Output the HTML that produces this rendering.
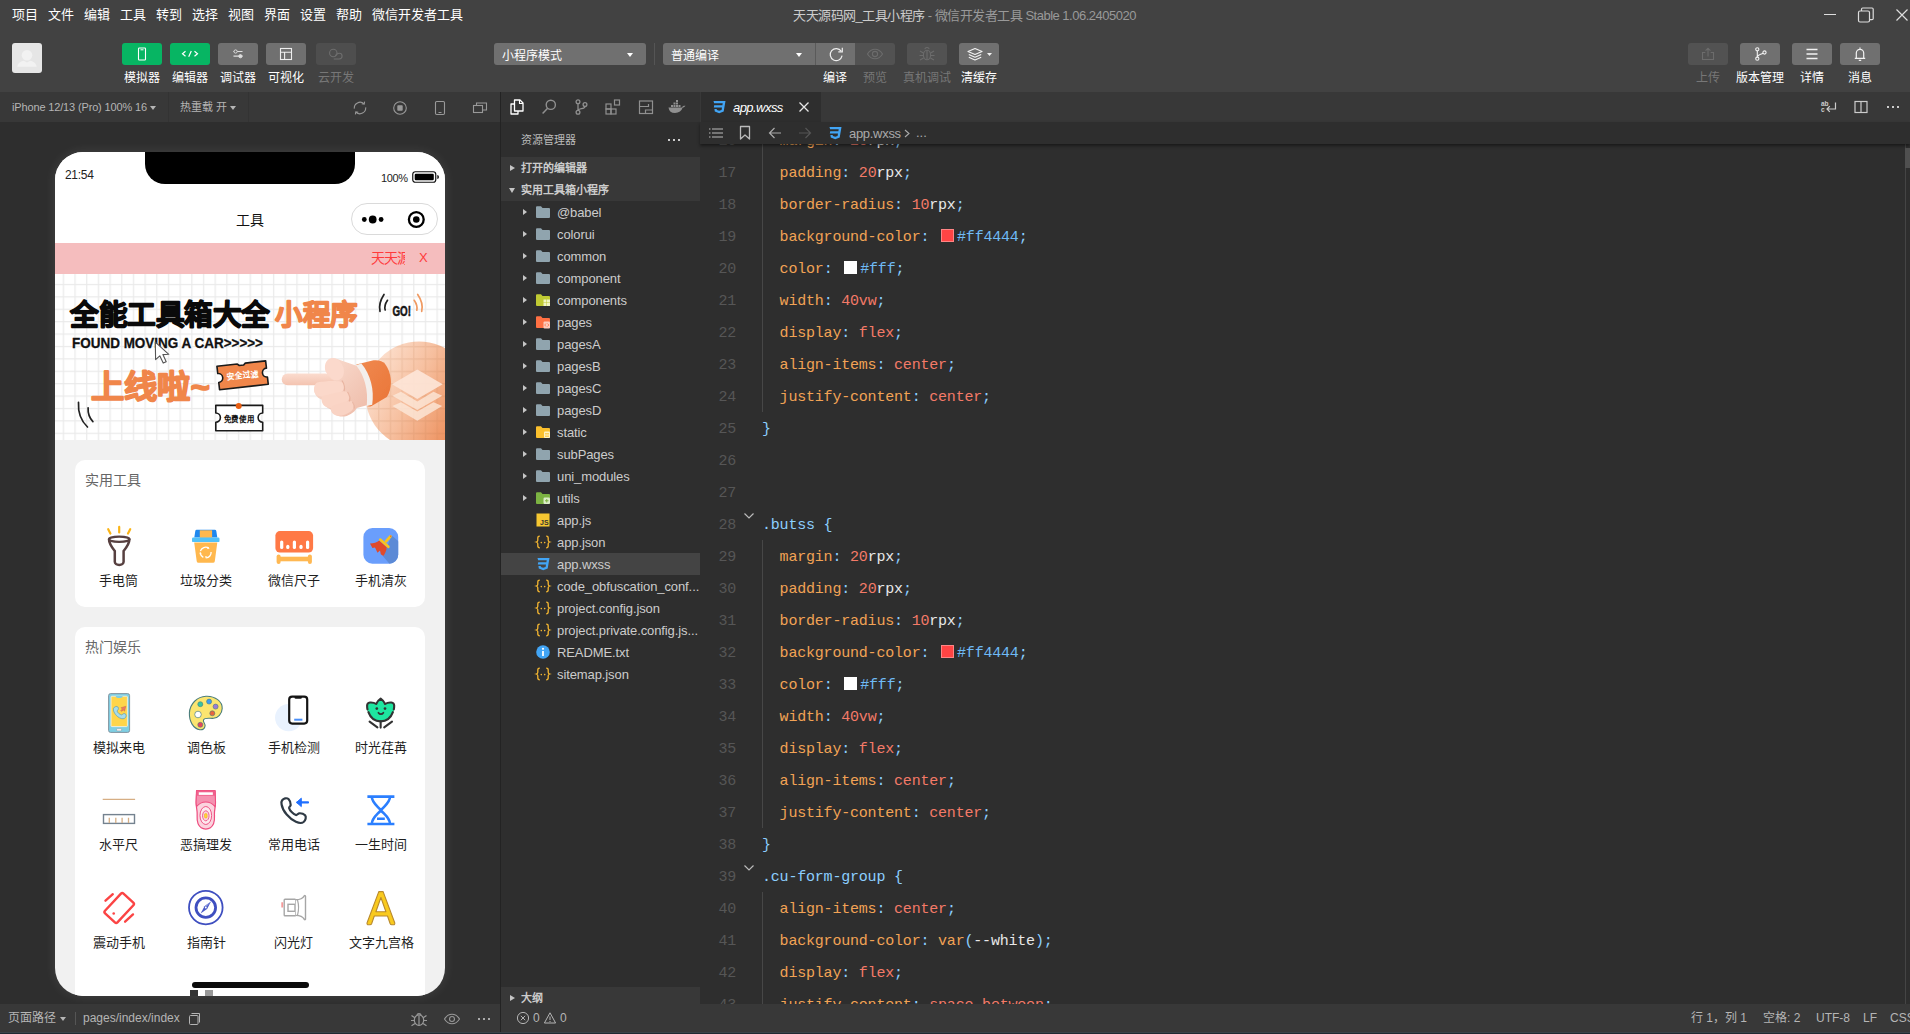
<!DOCTYPE html>
<html lang="zh-CN">
<head>
<meta charset="utf-8">
<title>微信开发者工具</title>
<style>
*{box-sizing:border-box;margin:0;padding:0}
html,body{width:1910px;height:1034px;overflow:hidden;background:#2e2e2e}
body{font-family:"Liberation Sans",sans-serif;font-size:12px;color:#ccc;position:relative;-webkit-font-smoothing:antialiased}
.abs{position:absolute}
svg{display:block;overflow:visible}
/* ---------- top bar ---------- */
#top{position:absolute;left:0;top:0;width:1910px;height:92px;background:#424242}
#menu{position:absolute;left:12px;top:6px;height:18px;line-height:18px;font-size:13px;color:#fff;white-space:nowrap}
#menu span{position:absolute;top:0;white-space:nowrap}
#title{position:absolute;left:793px;top:7px;width:360px;letter-spacing:-.500px;height:18px;line-height:18px;font-size:13px;color:#999;white-space:nowrap;overflow:hidden}
#title b{font-weight:normal;color:#ccc}
.tb{position:absolute;top:43px;width:40px;height:22px;border-radius:3px;background:#707070}
.tb.g{background:#07b563}
.tb.d{background:#525252}
.tl{position:absolute;top:70px;height:16px;line-height:16px;width:80px;margin-left:-40px;text-align:center;font-size:12px;color:#fff;white-space:nowrap}
.tl.d{color:#777}
.sel{position:absolute;top:43px;height:22px;background:#707070;border-radius:3px;color:#fff;font-size:12px;line-height:26px;padding-left:8px;white-space:nowrap;overflow:hidden}
.caret{position:absolute;width:0;height:0;border-left:3px solid transparent;border-right:3px solid transparent;border-top:4px solid #fff}
/* ---------- simulator ---------- */
#simbar{position:absolute;left:0;top:92px;width:500px;height:30px;background:#383838;color:#b5b5b5;font-size:11px;line-height:30px;white-space:nowrap}
#vdiv{position:absolute;left:500px;top:92px;width:1px;height:942px;background:#232323}
#sim{position:absolute;left:0;top:122px;width:500px;height:882px;background:#2e2e2e;overflow:hidden}
#simfoot{position:absolute;left:0;top:1004px;width:500px;height:30px;background:#383838;color:#b5b5b5;font-size:12px;line-height:28px;white-space:nowrap}
/* ---------- editor side ---------- */
#actbar{position:absolute;left:501px;top:92px;width:199px;height:30px;background:#333}
#explorer{position:absolute;left:501px;top:122px;width:199px;height:882px;background:#2e2e2e;overflow:hidden;font-size:13px;color:#ccc}
#tabs{position:absolute;left:700px;top:92px;width:1210px;height:30px;background:#383838}
#crumbs{position:absolute;left:700px;top:122px;width:1210px;height:22px;background:#2e2e2e;z-index:3;box-shadow:0 2px 3px rgba(0,0,0,.45)}
#code{position:absolute;left:700px;top:144px;width:1210px;height:860px;background:#2e2e2e;overflow:hidden}
#status{position:absolute;left:501px;top:1004px;width:1409px;height:30px;background:#383838;color:#b5b5b5;font-size:12px;line-height:28px;white-space:nowrap}

/* ---------- phone ---------- */
#phone{position:absolute;left:55px;top:30px;width:390px;height:844px;background:#f1f1f1;border-radius:28px;overflow:hidden;color:#222;box-shadow:0 0 12px rgba(255,255,255,.1)}
#notch{position:absolute;left:90px;top:0;width:210px;height:32px;background:#000;border-radius:0 0 20px 20px;z-index:5}
#nav{position:absolute;left:0;top:0;width:390px;height:91px;background:#fff}
#notice{position:absolute;left:0;top:91px;width:390px;height:31px;background:#f5bdbe;color:#ff3b3b;font-size:14px;line-height:30px}
#banner{position:absolute;left:0;top:122px;width:390px;height:166px;background:#fff;overflow:hidden}
.card{position:absolute;left:20px;width:350px;background:#fff;border-radius:10px}
.ct{position:absolute;left:10px;top:11px;font-size:14px;line-height:18px;color:#666;white-space:nowrap}
.it{position:absolute;width:87.500px;height:70px;text-align:center}
.it svg{position:absolute;left:23.750px;top:0;width:40px;height:40px}
.it span{position:absolute;left:-10px;right:-10px;top:47px;font-size:13px;line-height:16px;color:#1f1f1f;white-space:nowrap;text-align:center}

/* ---------- explorer ---------- */
.sec{position:absolute;left:0;width:199px;height:22px;line-height:22px;background:#383838;color:#ccc;font-size:11px;font-weight:700;padding-left:20px;white-space:nowrap}
.sec i{position:absolute;left:9px;top:8px;width:0;height:0;border-top:3.500px solid transparent;border-bottom:3.500px solid transparent;border-left:5px solid #c5c5c5}
.sec i.o{left:8px;top:9px;border-left:3.500px solid transparent;border-right:3.500px solid transparent;border-top:5px solid #c5c5c5;border-bottom:0}
.row{position:absolute;left:0;width:199px;height:22px;line-height:22px;color:#ccc;font-size:13px;white-space:nowrap;overflow:hidden}
.row.s{background:#444}
.row b{position:absolute;left:56px;top:1px;font-weight:normal;letter-spacing:-.100px}
.row i{position:absolute;left:22px;top:7.500px;width:0;height:0;border-top:3.500px solid transparent;border-bottom:3.500px solid transparent;border-left:4.500px solid #c5c5c5}
.row svg{position:absolute;left:34px;top:3px;width:16px;height:16px}
/* ---------- code ---------- */
#code{font-family:"Liberation Mono",monospace;font-size:15px;letter-spacing:-.200px;color:#e6e6e6}
.ln{position:absolute;left:0;width:36px;text-align:right;height:32px;line-height:36px;color:#565656;white-space:pre}
.cl{position:absolute;left:62px;height:32px;line-height:36px;white-space:pre}
.p{color:#f2a355}.n{color:#f47a68}.u{color:#e8e8e8}.c{color:#8ccfff}.h{color:#6fbaf5}.k{color:#f47a68}
.sw{display:inline-block;width:13px;height:13px;margin:0 3px -1px 3px;border:1px solid rgba(255,255,255,.35)}
.ig{position:absolute;left:62px;width:1px;background:#474747}
.fold{position:absolute;left:43px;width:12px;height:12px}
</style>
</head>
<body>

<!-- ================= TOP BAR ================= -->
<div id="top">
  <div id="menu">
    <span style="left:0">项目</span><span style="left:36px">文件</span><span style="left:72px">编辑</span><span style="left:108px">工具</span><span style="left:144px">转到</span><span style="left:180px">选择</span><span style="left:216px">视图</span><span style="left:252px">界面</span><span style="left:288px">设置</span><span style="left:324px">帮助</span><span style="left:360px">微信开发者工具</span>
  </div>
  <div id="title"><b>天天源码网_工具小程序</b> - 微信开发者工具 Stable 1.06.2405020</div>
  <!-- avatar -->
  <div class="abs" style="left:12px;top:43px;width:30px;height:30px;border-radius:3px;background:#e6e6e6;overflow:hidden">
    <svg width="30" height="30" viewBox="0 0 30 30"><circle cx="15" cy="12.300" r="5.300" fill="#f2f2f2"/><path d="M5.300 23.800c.5-3.600 3.200-5.400 6.400-6.100l3.300 1.800 3.300-1.800c3.200.7 5.900 2.500 6.400 6.100z" fill="#f2f2f2"/></svg>
  </div>
  <!-- left buttons -->
  <div class="tb g" style="left:122px"><svg width="40" height="22" viewBox="0 0 40 22"><rect x="16.500" y="5" width="7" height="12" rx=".8" fill="none" stroke="#fff" stroke-width="1.100"/><path d="M18.500 6.800h3" stroke="#fff" stroke-width="1"/></svg></div>
  <div class="tb g" style="left:170px"><svg width="40" height="22" viewBox="0 0 40 22"><path d="M15.500 8.300l-3 2.500 3 2.500M24.500 8.300l3 2.500-3 2.500M21.300 8l-2.600 5.800" fill="none" stroke="#fff" stroke-width="1.200"/></svg></div>
  <div class="tb" style="left:218px"><svg width="40" height="22" viewBox="0 0 40 22"><path d="M15.500 8.500h9M15.500 13.200h9" stroke="#ddd" stroke-width="1.200"/><circle cx="17.600" cy="8.500" r="1.600" fill="#6b6b6b" stroke="#ddd" stroke-width="1"/><circle cx="22.400" cy="13.200" r="1.600" fill="#ddd" stroke="#ddd" stroke-width="1"/></svg></div>
  <div class="tb" style="left:266px"><svg width="40" height="22" viewBox="0 0 40 22"><rect x="14.500" y="5.500" width="11" height="11" fill="none" stroke="#eee" stroke-width="1.100"/><path d="M14.500 9.200h11M18.600 9.200v7.300" stroke="#eee" stroke-width="1.100"/></svg></div>
  <div class="tb d" style="left:316px;background:#4e4e4e"><svg width="40" height="22" viewBox="0 0 40 22"><circle cx="17.300" cy="10" r="3.700" fill="none" stroke="#6e6e6e" stroke-width="1.100"/><path d="M19.300 13.100c.8-1.900 2.300-2.900 3.900-2.900a2.900 2.900 0 0 1 0 5.800h-5.500" fill="none" stroke="#6e6e6e" stroke-width="1.100"/></svg></div>
  <div class="tl" style="left:142px">模拟器</div>
  <div class="tl" style="left:190px">编辑器</div>
  <div class="tl" style="left:238px">调试器</div>
  <div class="tl" style="left:286px">可视化</div>
  <div class="tl d" style="left:336px">云开发</div>
  <!-- mode select -->
  <div class="sel" style="left:494px;width:152px">小程序模式</div>
  <div class="caret" style="left:627px;top:53px"></div>
  <div class="abs" style="left:654px;top:43px;width:1px;height:22px;background:#555"></div>
  <div class="sel" style="left:663px;width:152px;border-radius:3px 0 0 3px">普通编译</div>
  <div class="caret" style="left:796px;top:53px"></div>
  <div class="tb" style="left:815px;border-radius:0;border-left:1px solid #5a5a5a"><svg width="40" height="22" viewBox="0 0 40 22"><path d="M25.200 8.200a6 6 0 1 0 .9 4.500" fill="none" stroke="#eee" stroke-width="1.200"/><path d="M26.300 4.800v4h-4" fill="none" stroke="#eee" stroke-width="1.200"/></svg></div>
  <div class="tb d" style="left:855px;border-radius:0 3px 3px 0;background:#525252"><svg width="40" height="22" viewBox="0 0 40 22"><path d="M12.500 11c2-3.300 4.600-4.800 7.500-4.800s5.500 1.500 7.500 4.800c-2 3.300-4.600 4.800-7.500 4.800s-5.500-1.500-7.500-4.800z" fill="none" stroke="#6c6c6c" stroke-width="1.100"/><circle cx="20" cy="11" r="2.600" fill="none" stroke="#6c6c6c" stroke-width="1.100"/></svg></div>
  <div class="tb d" style="left:907px;background:#525252"><svg width="40" height="22" viewBox="0 0 40 22"><ellipse cx="20" cy="12" rx="3.600" ry="4.800" fill="none" stroke="#6c6c6c" stroke-width="1.100"/><path d="M20 7.200v9.600M17.800 6.200a2.300 2.300 0 0 1 4.400 0M13 8l3.400 2M27 8l-3.400 2M12.500 12.500h3.900M27.500 12.500h-3.900M13 17l3.600-2M27 17l-3.600-2" fill="none" stroke="#6c6c6c" stroke-width="1.100"/></svg></div>
  <div class="tb" style="left:959px"><svg width="40" height="22" viewBox="0 0 40 22"><path d="M16 5.500l7 3-7 3-7-3zM9.800 11.500l6.200 2.700 6.200-2.700M9.800 14.300l6.200 2.700 6.200-2.700" transform="translate(0 0)" fill="none" stroke="#f2f2f2" stroke-width="1.200" stroke-linejoin="round"/><path d="M28 10l2.500 3 2.500-3z" fill="#f2f2f2"/></svg></div>
  <div class="tl" style="left:835px">编译</div>
  <div class="tl d" style="left:875px">预览</div>
  <div class="tl d" style="left:927px">真机调试</div>
  <div class="tl" style="left:979px">清缓存</div>
  <!-- right buttons -->
  <div class="tb d" style="left:1688px;background:#525252"><svg width="40" height="22" viewBox="0 0 40 22"><path d="M17.300 9.500h-2.800v7h11v-7h-2.800M20 13.500v-8M17.600 7.600l2.400-2.400 2.400 2.400" fill="none" stroke="#6c6c6c" stroke-width="1.100"/></svg></div>
  <div class="tb" style="left:1740px"><svg width="40" height="22" viewBox="0 0 40 22"><circle cx="17.300" cy="6.300" r="1.600" fill="none" stroke="#f2f2f2" stroke-width="1.100"/><circle cx="17.300" cy="15.700" r="1.600" fill="none" stroke="#f2f2f2" stroke-width="1.100"/><circle cx="24.500" cy="9.500" r="1.600" fill="none" stroke="#f2f2f2" stroke-width="1.100"/><path d="M17.300 7.900v6.200M17.500 13.500c.5-2 3.500-2 5.600-3.300" fill="none" stroke="#f2f2f2" stroke-width="1.100"/></svg></div>
  <div class="tb" style="left:1792px"><svg width="40" height="22" viewBox="0 0 40 22"><path d="M14.500 6.500h11M14.500 11h11M14.500 15.500h11" stroke="#f2f2f2" stroke-width="1.300"/></svg></div>
  <div class="tb" style="left:1840px"><svg width="40" height="22" viewBox="0 0 40 22"><path d="M14.800 15.300h10.400M16.300 15.300v-5.300a3.700 3.700 0 0 1 7.400 0v5.300M20 4.500v1.800M18.800 17.300h2.400" fill="none" stroke="#f2f2f2" stroke-width="1.200"/></svg></div>
  <div class="tl d" style="left:1708px">上传</div>
  <div class="tl" style="left:1760px">版本管理</div>
  <div class="tl" style="left:1812px">详情</div>
  <div class="tl" style="left:1860px">消息</div>
  <!-- window controls -->
  <div class="abs" style="left:1824px;top:14px;width:12px;height:1px;background:#ddd"></div>
  <svg class="abs" style="left:1857px;top:6px" width="18" height="18" viewBox="0 0 18 18"><rect x="1.500" y="5" width="11" height="11" rx="1.500" fill="none" stroke="#ddd" stroke-width="1.200"/><path d="M4.500 5v-1.800a1.200 1.200 0 0 1 1.200-1.200h9.300a1.200 1.200 0 0 1 1.200 1.200v9.300a1.200 1.200 0 0 1-1.200 1.200h-2.500" fill="none" stroke="#ddd" stroke-width="1.200"/></svg>
  <svg class="abs" style="left:1895px;top:8px" width="14" height="14" viewBox="0 0 14 14"><path d="M1.500 1.500l11 11M12.500 1.500l-11 11" stroke="#ddd" stroke-width="1.200"/></svg>
</div>

<!-- ================= SIMULATOR ================= -->
<div id="simbar">
  <span class="abs" style="left:12px;top:0;letter-spacing:-.150px">iPhone 12/13 (Pro) 100% 16</span>
  <div class="caret" style="left:150px;top:14px;border-top-color:#b5b5b5"></div>
  <div class="abs" style="left:168px;top:0;width:1px;height:30px;background:#333"></div>
  <span class="abs" style="left:180px;top:0">热重载 开</span>
  <div class="caret" style="left:230px;top:14px;border-top-color:#b5b5b5"></div>
  <div class="abs" style="left:248px;top:0;width:1px;height:30px;background:#333"></div>
  <svg class="abs" style="left:352px;top:7.500px" width="16" height="16" viewBox="0 0 16 16"><path d="M2.300 8.600a5.800 5.800 0 0 1 9.600-4.900M13.700 7.400a5.800 5.800 0 0 1-9.600 4.900" fill="none" stroke="#999" stroke-width="1.100"/><path d="M12.600 1.600l-.4 2.500-2.500-.4M3.400 14.400l.4-2.500 2.500.4" fill="none" stroke="#999" stroke-width="1.100"/></svg>
  <svg class="abs" style="left:392px;top:7.500px" width="16" height="16" viewBox="0 0 16 16"><circle cx="8" cy="8" r="6.300" fill="none" stroke="#999" stroke-width="1.100"/><rect x="5.300" y="5.300" width="5.400" height="5.400" rx=".8" fill="#999"/></svg>
  <svg class="abs" style="left:432px;top:7.500px" width="16" height="16" viewBox="0 0 16 16"><rect x="3.500" y="1.500" width="9" height="13" rx="1.200" fill="none" stroke="#999" stroke-width="1.100"/><path d="M6.500 12.500h3" stroke="#999" stroke-width="1"/></svg>
  <svg class="abs" style="left:472px;top:7.500px" width="16" height="16" viewBox="0 0 16 16"><rect x="1.500" y="5.500" width="9" height="7" fill="none" stroke="#999" stroke-width="1.100"/><path d="M4.500 5.500v-2.500h10v7h-4" fill="none" stroke="#999" stroke-width="1.100"/></svg>
</div>
<div id="sim">
 <div id="phone">
  <div id="nav">
    <span class="abs" style="left:10px;top:16px;font-size:12px;line-height:14px;color:#222;letter-spacing:-.300px">21:54</span>
    <span class="abs" style="left:326px;top:19px;font-size:11px;line-height:14px;color:#222;letter-spacing:-.400px">100%</span>
    <svg class="abs" style="left:357px;top:19px" width="28" height="13" viewBox="0 0 28 13"><rect x=".75" y=".75" width="23" height="10.500" rx="2.500" fill="#fff" stroke="#111" stroke-width="1.200"/><rect x="2.700" y="2.700" width="19.100" height="6.600" rx="1.200" fill="#000"/><path d="M25.300 4v4c1.200-.3 1.600-1.100 1.600-2s-.4-1.700-1.600-2z" fill="#111"/></svg>
    <span class="abs" style="left:145px;top:58px;width:100px;text-align:center;font-size:14px;line-height:20px;color:#111">工具</span>
    <div class="abs" style="left:296px;top:51px;width:87px;height:32px;border:1px solid #dadada;border-radius:16px;background:#fff"></div>
    <svg class="abs" style="left:296px;top:51px" width="87" height="32" viewBox="0 0 87 32"><circle cx="13.300" cy="16.500" r="2.400" fill="#000"/><circle cx="21.700" cy="16.500" r="3.900" fill="#000"/><circle cx="30.100" cy="16.500" r="2.400" fill="#000"/><circle cx="65.300" cy="16.500" r="7.400" fill="none" stroke="#000" stroke-width="2.300"/><circle cx="65.300" cy="16.500" r="3.300" fill="#000"/></svg>
  </div>
  <div id="notch"></div>
  <div id="notice"><span class="abs" style="left:316px;top:0;width:34px;overflow:hidden;white-space:nowrap;letter-spacing:-1px">天天源码</span><span class="abs" style="left:364px;top:0;font-size:13px">X</span></div>
  <div id="banner"><svg width="390" height="166" viewBox="0 0 390 166" font-family="'Liberation Sans',sans-serif">
  <defs>
    <pattern id="grid" x="7.700" y="9.900" width="11.680" height="12.400" patternUnits="userSpaceOnUse"><path d="M.7 0v12.400M0 .7h11.680" stroke="#eaeaea" stroke-width="1.200" fill="none"/></pattern>
    <pattern id="grid2" x="7.700" y="9.900" width="11.680" height="12.400" patternUnits="userSpaceOnUse"><path d="M.7 0v12.400M0 .7h11.680" stroke="#b9744a" stroke-opacity=".16" stroke-width="1.300" fill="none"/></pattern>
    <linearGradient id="circ" x1="0" y1=".25" x2="1" y2=".75"><stop offset="0" stop-color="#fde3d3"/><stop offset=".45" stop-color="#f6bc9a"/><stop offset="1" stop-color="#ea7f45"/></linearGradient>
    <linearGradient id="skin" x1="0" y1="0" x2="0" y2="1"><stop offset="0" stop-color="#fbdccf"/><stop offset="1" stop-color="#f3c3b0"/></linearGradient>
    <linearGradient id="skin2" x1="0" y1="0" x2="1" y2="1"><stop offset="0" stop-color="#fbe0d4"/><stop offset="1" stop-color="#eebba8"/></linearGradient>
    <linearGradient id="slv" x1="0" y1="0" x2="1" y2="1"><stop offset="0" stop-color="#f08a50"/><stop offset="1" stop-color="#ea7538"/></linearGradient>
    <filter id="soft" x="-10%" y="-10%" width="120%" height="120%"><feGaussianBlur stdDeviation=".45"/></filter>
  </defs>
  <rect width="390" height="166" fill="#fff"/>
  <rect width="390" height="166" fill="url(#grid)"/>
  <!-- circle + layers -->
  <circle cx="364" cy="121" r="53.500" fill="url(#circ)" opacity=".96"/>
  <circle cx="364" cy="121" r="53.500" fill="url(#grid2)"/>
  <g fill="#fdeadc" opacity=".78">
    <path d="M337.400 132l8.600-3.800 16.300 9.400 16.200-9.400 8.700 3.800-24.900 14.700z"/>
    <path d="M337.400 121.700l8.600-3.900 16.300 9.600 16.200-9.600 8.700 3.900-24.900 14.400z"/>
  </g>
  <path d="M336.900 110.200l25.400-14.700 25.400 14.700-25.400 14.700z" fill="#fde6d8" opacity=".9"/>
  <!-- hand -->
  <g filter="url(#soft)">
    <path d="M301.300 90.600l17.300-4.300c5-.6 9.200.9 11.200 3.300 4.200 5.500 6.200 12.500 6.100 19.200-.2 5.800-1.500 10.300-4.100 14.300l-15.200 9c-2.200.8-4 .6-5-.3z" fill="url(#slv)"/>
    <path d="M300 91.600c8.500 10 12.800 26 11 40.600l6.200-1.500c2.300-14.600-1.600-30.500-10.800-41.200z" fill="#f3efec"/>
    <path d="M272 99c-1.800-5.500-1.700-10.300 1.500-13 3.400-2.800 8.200-2.200 12.800.6l15.200 5.200c8 10 12 25 10.200 39.500l-9.800 2.600c-3 5-8.600 8.400-14.300 8.600-5.400.2-9.500-2.800-11.600-6.800-4.600-1.800-7.600-5.500-8.400-9.600-4.600-1.500-7.600-4.800-8.200-8.500-.5-3 .7-5.500 3-7l9.600-.4z" fill="url(#skin2)"/>
    <rect x="226.700" y="99.500" width="52" height="11.800" rx="5.900" fill="url(#skin)"/>
    <path d="M270.500 97.500c-1.500-6 .2-11 4-12.800 4.200-2 9.300.5 12.200 5.200 2.700 4.300 3 9.500.8 13-2.300 3.600-7 4.400-11 2z" fill="#fbd9cc"/>
    <path d="M262 108.500c8-1.400 18-2 23.500-.8 4 1 5.300 4.200 3.600 7.400-1.800 3.400-6.600 5.500-12.300 7-5.700 1.500-12.500 1.300-15.700-1.500-3.400-3-2.500-10 .9-12.100z" fill="#fbd8ca"/>
    <path d="M268.500 121.600c7-1.500 17-4.500 21.500-4.200 4 .3 5.800 3.400 4.600 6.700-1.400 3.800-5.500 6.300-10.600 8.300-5.200 2-11.400 2.400-14.800-.6-3.300-3-3.300-8.700-.7-10.200z" fill="#fad5c6"/>
    <path d="M278 131.500c5.500-1.500 12.500-4.700 16.700-4.600 3.600 0 5.300 2.700 4.500 5.600-1 3.600-4.600 6.200-9 8-4.500 1.900-9.700 2-12.500-1-2.600-2.700-2-6.800.3-8z" fill="#f9d3c4"/>
    <path d="M287 106.500c2.300 3.500 3 7.500 2 10.500M292.500 118c2.200 3 2.800 6.300 2 9.500M297.500 128c1.800 2.300 2 4.500 1.600 6.500" fill="none" stroke="#e3a994" stroke-width="1.200" opacity=".7"/>
  </g>
  <!-- main text -->
  <text x="15" y="50.500" font-size="28" font-weight="900" fill="#0a0a0a" stroke="#0a0a0a" stroke-width="1.500" stroke-linejoin="round" textLength="200" lengthAdjust="spacingAndGlyphs">全能工具箱大全</text>
  <text x="220" y="50.500" font-size="28" font-weight="900" fill="#f0864a" stroke="#f0864a" stroke-width="1.500" stroke-linejoin="round" textLength="82.500" lengthAdjust="spacingAndGlyphs">小程序</text>
  <text x="17" y="74" font-size="15.500" font-weight="700" fill="#111" stroke="#111" stroke-width=".3" textLength="191" lengthAdjust="spacingAndGlyphs">FOUND MOVING A CAR&gt;&gt;&gt;&gt;&gt;</text>
  <text x="36" y="124" font-size="32" font-weight="900" fill="#f0864a" stroke="#f0864a" stroke-width="1.600" stroke-linejoin="round" textLength="119" lengthAdjust="spacingAndGlyphs">上线啦~</text>
  <!-- GO! -->
  <text x="337.400" y="41.700" font-size="14" font-weight="700" fill="#151515" stroke="#151515" stroke-width=".5" textLength="18.600" lengthAdjust="spacingAndGlyphs">GO!</text>
  <path d="M329 20.500c-3.800 5.800-5.200 11.500-4 16.800M332.500 26.300c-2.400 3.500-3.200 6.700-2.300 9.600" fill="none" stroke="#222" stroke-width="1.700" stroke-linecap="round"/>
  <path d="M362.700 20.500c4 5.800 5.300 11.500 4 16.800M359.200 26.300c2.400 3.500 3.300 6.700 2.600 9.900" fill="none" stroke="#f09a62" stroke-width="1.700" stroke-linecap="round"/>
  <path d="M23.500 128.400c-.6 10 2.500 18.500 9 24.600M33.100 133.800c-.3 5.500 1.300 10.200 4.800 13.800" fill="none" stroke="#222" stroke-width="1.700" stroke-linecap="round"/>
  <!-- tickets -->
  <g transform="translate(187.600 101.300) rotate(-6.400)">
    <path d="M-24.500 -11.800h20.500l1.800 1.700h4.400l1.800-1.700h20.500v7.300a4.500 4.500 0 0 0 0 9v7.300h-49v-7.300a4.500 4.500 0 0 0 0-9z" fill="#f0864a" stroke="#1a1a1a" stroke-width="1.600" stroke-linejoin="round"/>
    <text x="-16.500" y="3.200" font-size="8.500" font-weight="900" fill="#fff" textLength="33" lengthAdjust="spacingAndGlyphs">安全过滤</text>
  </g>
  <path d="M160.800 131.400h46.900v7.600a4.600 4.600 0 0 0 0 9.200v8.500h-46.900v-8.500a4.600 4.600 0 0 0 0-9.200z" fill="#fff" stroke="#1a1a1a" stroke-width="1.600" stroke-linejoin="round"/>
  <text x="168.500" y="147.500" font-size="8.500" font-weight="900" fill="#111" textLength="31.500" lengthAdjust="spacingAndGlyphs">免费使用</text>
  <circle cx="183.700" cy="131.900" r="3" fill="#e85d10"/>
  <!-- mouse cursor -->
  <path d="M100.300 68.200l.3 17.400 4.200-3.800 3.400 7.300 3-1.400-3.300-7.100 5.900-.3z" fill="#fff" stroke="#555" stroke-width="1.100" stroke-linejoin="round"/>
</svg></div>
  <div class="card" style="top:308px;height:147px"><div class="ct">实用工具</div>
    <div class="it" style="left:0px;top:66px"><svg viewBox="0 0 40 40"><path d="M9.200 3.200l2.200 4.300M20.200 .9v5.500M31.200 3.200l-2.200 4.300" stroke="#fbb416" stroke-width="2.200" stroke-linecap="round"/><path d="M10 13.300c0 4.700 3 8.200 5.800 11.700v10.800c0 1.700 1.900 3.100 4.400 3.100s4.400-1.400 4.400-3.100v-10.800c2.800-3.500 5.800-7 5.800-11.700z" fill="#fff" stroke="#574040" stroke-width="2.500" stroke-linejoin="round"/><ellipse cx="20.200" cy="13.300" rx="10.200" ry="2.600" fill="#fff" stroke="#574040" stroke-width="2.300"/></svg><span>手电筒</span></div>
    <div class="it" style="left:87.5px;top:66px"><svg viewBox="0 0 40 40"><path d="M8.200 16.600h23.100l-2.500 18.700a1.800 1.800 0 0 1-1.800 1.500h-14.500a1.800 1.800 0 0 1-1.800-1.500z" fill="#ffb84e"/><path d="M10.800 3.800h18a1.500 1.500 0 0 1 1.500 1.300l1 6.400h-23l1-6.400a1.500 1.500 0 0 1 1.500-1.300z" fill="#1e88ef"/><rect x="13.800" y="4.300" width="12.300" height="7.500" fill="#ffb84e"/><rect x="6" y="11.500" width="27.500" height="4.600" rx="1.200" fill="#52c1f8"/><path d="M14.400 25.200a5.400 5.400 0 0 1 8.300-3M25.100 26a5.400 5.400 0 0 1-5 5.900M17.300 31.300a5.400 5.400 0 0 1-3-4" fill="none" stroke="#fff" stroke-width="1.300"/><path d="M21.800 20.600l1.800 1.800-2.400.6zM21.300 30.600l-1.500 2-.8-2.300zM13.600 28.300l.3-2.500 1.800 1.700z" fill="#fff"/></svg><span>垃圾分类</span></div>
    <div class="it" style="left:175px;top:66px"><svg viewBox="0 0 40 40"><rect x="1.400" y="5.100" width="37.700" height="21.400" rx="4.500" fill="#ff7946"/><g fill="#fff"><rect x="6.100" y="14.400" width="3.200" height="8.600" rx="1.600"/><rect x="12.200" y="18.800" width="3.200" height="4.200" rx="1.600"/><rect x="18.800" y="14.400" width="3.200" height="8.600" rx="1.600"/><rect x="25.400" y="18.800" width="3.200" height="4.200" rx="1.600"/><rect x="32" y="14.400" width="3.200" height="8.600" rx="1.600"/></g><rect x="3.500" y="30.700" width="33.500" height="4.600" fill="#ffb852"/><rect x="2.600" y="28.500" width="4" height="9.500" rx="2" fill="#ffb852"/><rect x="33.900" y="28.500" width="4" height="9.500" rx="2" fill="#ffb852"/></svg><span>微信尺子</span></div>
    <div class="it" style="left:262.5px;top:66px"><svg viewBox="0 0 40 40"><defs><clipPath id="pc"><rect x="2.400" y="2" width="34.800" height="35.700" rx="9"/></clipPath></defs><rect x="2.400" y="2" width="34.800" height="35.700" rx="9" fill="#6a9efc"/><g clip-path="url(#pc)"><path d="M30.500 9.300l11 9.500v23h-9.500l-10-11.500 4-9z" fill="#5c8ad6"/></g><path d="M29.400 10.400l-4.200 4.800" stroke="#fbc31b" stroke-width="2.800" stroke-linecap="round"/><circle cx="29.600" cy="10.200" r=".7" fill="#e8643a"/><path d="M18.300 14.600l7.500 6.600c-.3 3.300-1.800 6.300-3.500 8.900l-2.500-1.900-.8-3.700-2.500 2.300-2.500-5.300-2.600.5-2.400-4.500c3.500 0 7-1 9.300-2.900z" fill="#e04a2b"/><path d="M19.200 13.600l8.200 7.200" stroke="#f7c520" stroke-width="2.600" stroke-linecap="round"/></svg><span>手机清灰</span></div>
  </div>
  <div class="card" style="top:475px;height:420px;border-radius:10px 10px 0 0"><div class="ct">热门娱乐</div>
    <div class="it" style="left:0px;top:66px"><svg viewBox="0 0 40 40"><rect x="9.600" y=".6" width="21" height="38.800" rx="2" fill="#7ecfe4" stroke="#8394a0" stroke-width="1"/><rect x="12" y="3.200" width="16.400" height="30.400" rx=".8" fill="#ffd54a" stroke="#f4f1e4" stroke-width=".9"/><path d="M16.600 3h7.200c-.3 1.300-1.200 2-2.300 2h-2.600c-1.100 0-2-.7-2.300-2z" fill="#7ecfe4"/><rect x="17.600" y="35.600" width="5" height="2.300" rx=".8" fill="#f4f4f4" stroke="#8394a0" stroke-width=".5"/><path d="M14.600 15.200c.9-1.600 3.200-2.300 4.300-1.200.9 1 .6 2.400-.3 3.200-.5.500-.6 1.100-.2 1.700.9 1.300 2.100 2.300 3.500 2.900.6.300 1.200.1 1.600-.4.800-.9 2.200-1.200 3.100-.3 1.100 1.100.5 3.300-1 4.200-1.800 1.100-4.700.3-7.300-2-2.700-2.400-4.500-5.900-3.700-8.100z" fill="#a6dcec" stroke="#5a9cb4" stroke-width=".7"/><path d="M21.800 17.500l1.500-1.500-1.300-1.300 4.800-1.400-1.300 4.900-1.300-1.300-1.500 1.500z" fill="#ef7c62" stroke="#b85a48" stroke-width=".4" stroke-linejoin="round"/></svg><span>模拟来电</span></div>
    <div class="it" style="left:87.5px;top:66px"><svg viewBox="0 0 40 40"><path d="M20 3.200c9.300-.4 16.500 5.500 16.200 12.300-.2 5.500-4.300 9.500-8.700 9.800-3.500.3-9-1.200-10 1.700-.8 2.300 1.800 3.300 1.600 5.800-.2 2.800-2.500 4.300-5.300 3.900-6.500-1.100-10.700-8.300-10.400-16.600.4-9.500 8-16.500 16.600-16.900z" fill="#fbe570" stroke="#4a7d7c" stroke-width="1.100"/><circle cx="14.300" cy="11.200" r="2.500" fill="#35c4a4" stroke="#4a7d7c" stroke-width=".6"/><circle cx="23.100" cy="8.600" r="2.500" fill="#3c9bf0" stroke="#4a7d7c" stroke-width=".6"/><circle cx="29.600" cy="13.600" r="2.500" fill="#9b7ad8" stroke="#4a7d7c" stroke-width=".6"/><circle cx="26.300" cy="20.300" r="2.500" fill="#e8643e" stroke="#4a7d7c" stroke-width=".6"/><circle cx="14.300" cy="31.800" r="2.500" fill="#e8455e" stroke="#4a7d7c" stroke-width=".6"/><circle cx="12" cy="21.500" r="3.300" fill="#fff" stroke="#4a7d7c" stroke-width=".7"/></svg><span>调色板</span></div>
    <div class="it" style="left:175px;top:66px"><svg viewBox="0 0 40 40"><circle cx="14.700" cy="24.600" r="13.700" fill="#e9f2fe"/><rect x="15.200" y="3.600" width="18" height="27" rx="3" fill="#fff" stroke="#141414" stroke-width="2.200"/><path d="M20.500 3.600h7.400v.9a1.300 1.300 0 0 1-1.300 1.300h-4.800a1.300 1.300 0 0 1-1.300-1.300z" fill="#141414"/><rect x="20.200" y="25.700" width="8.200" height="2" fill="#4a8ff8"/></svg><span>手机检测</span></div>
    <div class="it" style="left:262.5px;top:66px"><svg viewBox="0 0 40 40"><path d="M19.650 5.600c2 1.300 3.600 3.200 4.500 5.400 1.700-1.200 3.900-1.700 6.300-1.500 1.800.2 2.800 1.200 2.900 3 .5 8.300-5 15.900-13.700 15.900s-14.200-7.600-13.700-15.900c.1-1.800 1.100-2.800 2.900-3 2.400-.2 4.600.3 6.300 1.500.9-2.200 2.500-4.100 4.500-5.400z" fill="#1ee6a0"/><path d="M6.500 16.400c-.3-1.300-.4-2.600-.4-3.900.1-1.800 1-2.800 2.800-3 2.400-.2 4.600.3 6.300 1.500.9-2.200 2.500-4.100 4.450-5.400 1.950 1.300 3.550 3.200 4.450 5.400 1.700-1.200 3.900-1.700 6.300-1.500 1.800.2 2.700 1.200 2.800 3 0 1.300-.1 2.600-.4 3.900M7.400 19.200c2 5.500 6.500 9.200 12.250 9.200s10.250-3.700 12.250-9.200" fill="none" stroke="#333" stroke-width="2.100" stroke-linecap="round" stroke-linejoin="round"/><circle cx="15.800" cy="15.600" r="1.350" fill="#333"/><circle cx="24" cy="15.600" r="1.350" fill="#333"/><path d="M17.400 19.700c1.300 2 3.700 2 5 0" fill="none" stroke="#333" stroke-width="1.700" stroke-linecap="round"/><path d="M19.650 28.400v6.200M8.600 28.700l7.800 5.600M31 28.700l-7.800 5.600" fill="none" stroke="#333" stroke-width="2.100" stroke-linecap="round"/></svg><span>时光荏苒</span></div>
    <div class="it" style="left:0px;top:163px"><svg viewBox="0 0 40 40"><path d="M3.700 9.400h32.400" stroke="#d6ae84" stroke-width="1.300"/><rect x="4.500" y="24.600" width="31" height="8.800" fill="#fff" stroke="#74828f" stroke-width="1.400"/><path d="M10.300 27.800v5.200M16.800 27.800v5.200M23.100 27.800v5.200M29.500 27.800v5.200" stroke="#d6ae84" stroke-width="1.300"/></svg><span>水平尺</span></div>
    <div class="it" style="left:87.5px;top:163px"><svg viewBox="0 0 40 40"><g transform="translate(19.800 0) scale(.88 1) translate(-19.800 0)"><path d="M9.300 .8h21l.5 11.500c.2 4.500-1.500 8 -1.200 12.500.2 3.500.5 6-1 9-1.800 3.500-5 5.300-8.800 5.300s-7-1.800-8.800-5.300c-1.500-3-1.200-5.500-1-9 .3-4.500-1.400-8-1.200-12.500z" fill="#fbd3de" stroke="#ee4d7f" stroke-width="1.400" stroke-linejoin="round"/><path d="M9.300 .8h21l.5 11.500c0 1.500-.2 3-.5 4.300-3-3.200-6.500-4.600-10.500-4.600s-7.500 1.400-10.500 4.600c-.3-1.300-.5-2.800-.5-4.300z" fill="#f591b0" stroke="#ee4d7f" stroke-width="1.100" stroke-linejoin="round"/><path d="M9.300 .8h21l.15 5h-21.300z" fill="#f0608c"/><rect x="11.800" y="2.300" width="16" height="2.600" fill="#fff"/><ellipse cx="19.800" cy="25.500" rx="6.600" ry="9" fill="#fde8ee" stroke="#ee4d7f" stroke-width="1"/><ellipse cx="19.800" cy="25.800" rx="3.700" ry="5" fill="#fbd3de" stroke="#ee4d7f" stroke-width=".9"/><rect x="18.300" y="23.600" width="3" height="4.400" rx="1.200" fill="#ffd43b" stroke="#f0a000" stroke-width=".5"/></g></svg><span>恶搞理发</span></div>
    <div class="it" style="left:175px;top:163px"><svg viewBox="0 0 40 40"><path d="M8 10.500c1.500-2 4.700-3 6.500-1.500 1.500 1.500 2.200 4 2.200 6 0 1.200-1.800 1.800-1.600 3 .6 2.600 4 6 6.800 7 1.300.4 1.800-1.500 3.200-1.700 2.200-.2 4.700.7 6 2 1.400 1.800.5 5-1.500 6.700-2 1.600-5 1-7.700-.2-6.500-3-13.300-10.500-14.300-17.300-.3-1.600-.3-3 .4-4z" fill="none" stroke="#2f3a45" stroke-width="2.200" stroke-linejoin="round"/><path d="M23.500 12.400h10.500" fill="none" stroke="#1f6fff" stroke-width="2.200" stroke-linecap="round"/><path d="M27.300 8.200l-4.800 4.200 4.800 4.200z" fill="#1f6fff" stroke="#1f6fff" stroke-width="1" stroke-linejoin="round"/></svg><span>常用电话</span></div>
    <div class="it" style="left:262.5px;top:163px"><svg viewBox="0 0 40 40"><path d="M6.400 6.600h27M6.400 34h27" stroke="#2b7fff" stroke-width="2.600"/><path d="M10.800 6.600c0 6 5.200 9.200 9.100 13.700 3.900-4.500 9.100-7.700 9.100-13.700M10.800 34c0-6 5.200-9.200 9.100-13.700 3.900 4.500 9.100 7.700 9.100 13.700" fill="none" stroke="#2b7fff" stroke-width="2.600"/><path d="M16 28.800h7.800" stroke="#2b7fff" stroke-width="2.600"/></svg><span>一生时间</span></div>
    <div class="it" style="left:0px;top:261px"><svg viewBox="0 0 40 40"><rect x="-8.500" y="-13.500" width="17" height="27" rx="1.800" transform="translate(20.200 20) rotate(43)" fill="none" stroke="#fb4444" stroke-width="2.400"/><circle cx="14.700" cy="25.500" r="1.300" fill="#fb4444"/><path d="M6.500 12.700l7.300-6.500M26.100 33.700l7.900-7.300" stroke="#fb4444" stroke-width="2.400" stroke-linecap="round"/></svg><span>震动手机</span></div>
    <div class="it" style="left:87.5px;top:261px"><svg viewBox="0 0 40 40"><circle cx="19.800" cy="19.600" r="16.800" fill="none" stroke="#3f4fc0" stroke-width="1.800"/><circle cx="19.800" cy="19.600" r="9.800" fill="#fff" stroke="#3f4fc0" stroke-width="2.800"/><path d="M25 13.600l-3.900 7.300-6.500 4.700 3.900-7.300z" fill="#4a5ac8"/><path d="M25 13.600l-5.200 6-1.300-1.300z" fill="#8f9be0"/><circle cx="19.800" cy="19.600" r=".9" fill="#fff"/></svg><span>指南针</span></div>
    <div class="it" style="left:175px;top:261px"><svg viewBox="0 0 40 40"><rect x="10.200" y="11.300" width="11.500" height="16.500" rx=".8" fill="#fff" stroke="#a6a6a6" stroke-width="1.400"/><rect x="14" y="16.300" width="7" height="7" fill="#fff" stroke="#a6a6a6" stroke-width="1.400"/><path d="M21.700 11.800c4 0 7.300-1.500 8.600-4 .5-.5 1.200-.3 1.200.5v22.600c0 .8-.7 1-1.200.5-1.300-2.500-4.600-4-8.600-4" fill="#fff" stroke="#a6a6a6" stroke-width="1.400" stroke-linejoin="round"/><path d="M23.500 12c1.300 4.500 1.300 10.500 0 15.300" fill="none" stroke="#a6a6a6" stroke-width="1.200"/><path d="M8.200 14.300v5.200" stroke="#f59a9a" stroke-width="1.800"/></svg><span>闪光灯</span></div>
    <div class="it" style="left:262.5px;top:261px"><svg viewBox="0 0 40 40"><path d="M17.800 3.600h4.300l11.600 31.200c.4 1.100-.2 2-1.300 2h-1.600c-.8 0-1.400-.5-1.700-1.300l-2.600-7.500h-13.200l-2.600 7.500c-.3.800-.9 1.300-1.700 1.300h-1.600c-1.100 0-1.700-.9-1.300-2zM19.900 9.500l-5 14.200h10z" fill="#f9ca1e" stroke="#b98a2e" stroke-width="1.100" stroke-linejoin="round" fill-rule="evenodd"/></svg><span>文字九宫格</span></div>
  </div>
  <div class="abs" style="left:137px;top:830px;width:117px;height:6px;border-radius:3px;background:#0b0b0b;z-index:6"></div>
  <div class="abs" style="left:135px;top:838px;width:8px;height:6px;background:#333"></div>
  <div class="abs" style="left:150px;top:838px;width:8px;height:6px;background:#999"></div>
 </div>
</div>
<div id="simfoot">
  <span class="abs" style="left:8px;top:0">页面路径</span>
  <div class="caret" style="left:60px;top:13px;border-top-color:#b5b5b5"></div>
  <div class="abs" style="left:75px;top:8px;width:1px;height:13px;background:#555"></div>
  <span class="abs" style="left:83px;top:0">pages/index/index</span>
  <svg class="abs" style="left:187px;top:8px" width="14" height="14" viewBox="0 0 14 14"><rect x="2.500" y="3.500" width="8.500" height="9" rx="1" fill="none" stroke="#b5b5b5" stroke-width="1"/><path d="M4.500 1.500h8v9" fill="none" stroke="#b5b5b5" stroke-width="1"/></svg>
  <svg class="abs" style="left:410px;top:6px" width="18" height="18" viewBox="0 0 18 18"><ellipse cx="9" cy="10.200" rx="4.700" ry="5.300" fill="none" stroke="#999" stroke-width="1.200"/><path d="M9 5.500v10M6.800 5.300a2.300 2.300 0 0 1 4.400 0M1.500 5.500l3.300 2.300M16.500 5.500l-3.300 2.300M1 10.500h3.300M17 10.500h-3.300M1.500 15.800l3.500-2.300M16.500 15.800l-3.500-2.300" fill="none" stroke="#999" stroke-width="1.200"/></svg>
  <svg class="abs" style="left:443px;top:6px" width="18" height="18" viewBox="0 0 18 18"><path d="M1.500 9c2-3.300 4.600-4.800 7.500-4.800s5.500 1.500 7.500 4.800c-2 3.300-4.600 4.800-7.500 4.800s-5.500-1.500-7.500-4.800z" fill="none" stroke="#999" stroke-width="1.100"/><circle cx="9" cy="9" r="2.500" fill="none" stroke="#999" stroke-width="1.100"/></svg>
  <div class="abs" style="left:478px;top:14px;width:2px;height:2px;background:#aaa;box-shadow:5px 0 #aaa,10px 0 #aaa"></div>
</div>
<div id="vdiv"></div>

<!-- ================= EDITOR ================= -->
<div id="actbar">
  <svg class="abs" style="left:7px;top:6px" width="18" height="18" viewBox="0 0 18 18"><path d="M6.500 4.500v-2.500h5.500l3 3v8h-8.500z" fill="none" stroke="#fff" stroke-width="1.300" stroke-linejoin="round"/><path d="M11.500 2v3.500h3.500" fill="none" stroke="#fff" stroke-width="1.100"/><path d="M6.500 6h-3.500v10h7v-3" fill="none" stroke="#fff" stroke-width="1.300" stroke-linejoin="round"/></svg>
  <svg class="abs" style="left:39px;top:6px" width="18" height="18" viewBox="0 0 18 18"><circle cx="10.800" cy="6.800" r="4.600" fill="none" stroke="#909090" stroke-width="1.400"/><path d="M7.600 10.200l-5 5.300" stroke="#909090" stroke-width="1.500"/></svg>
  <svg class="abs" style="left:71px;top:6px" width="18" height="18" viewBox="0 0 18 18"><circle cx="6" cy="3.800" r="1.900" fill="none" stroke="#909090" stroke-width="1.300"/><circle cx="6" cy="14.200" r="1.900" fill="none" stroke="#909090" stroke-width="1.300"/><circle cx="13" cy="6.500" r="1.900" fill="none" stroke="#909090" stroke-width="1.300"/><path d="M6 5.700v6.600M13 8.400c0 3-6.500 1.600-7 4" fill="none" stroke="#909090" stroke-width="1.300"/></svg>
  <svg class="abs" style="left:103px;top:6px" width="18" height="18" viewBox="0 0 18 18"><rect x="2" y="6" width="5" height="5" fill="none" stroke="#909090" stroke-width="1.200"/><rect x="2" y="11" width="5" height="5" fill="none" stroke="#909090" stroke-width="1.200"/><rect x="7" y="11" width="5" height="5" fill="none" stroke="#909090" stroke-width="1.200"/><rect x="10.500" y="2" width="5" height="5" fill="none" stroke="#909090" stroke-width="1.200"/></svg>
  <svg class="abs" style="left:136px;top:6px" width="18" height="18" viewBox="0 0 18 18"><rect x="2.500" y="3" width="13" height="12.500" fill="none" stroke="#909090" stroke-width="1.200"/><path d="M2.500 8.500h9v-2.500M8.500 15.500v-3.500h7" fill="none" stroke="#909090" stroke-width="1.200"/></svg>
  <svg class="abs" style="left:166px;top:6px" width="20" height="18" viewBox="0 0 20 18"><path d="M1.500 9.500h13.500c.3-1.300 1.500-2 3.500-1.800-.8 1.200-1.800 1.700-2.800 1.900-1 3.500-3.800 5.400-7.700 5.400-3.700 0-6-1.800-6.500-5.500z" fill="#909090"/><path d="M4 7h2v2h-2zM6.500 7h2v2h-2zM9 7h2v2h-2zM6.500 4.500h2v2h-2zM9 4.500h2v2h-2zM11.500 7h2v2h-2zM9 2h2v2h-2z" fill="#909090"/></svg>
</div>
<div id="explorer">
<div class="abs" style="left:20px;top:7px;line-height:22px;font-size:11px;color:#bbb">资源管理器</div>
<div class="abs" style="left:167px;top:17px;width:2px;height:2px;background:#ccc;box-shadow:5px 0 #ccc,10px 0 #ccc"></div>
<div class="sec" style="top:35px"><i></i>打开的编辑器</div>
<div class="sec" style="top:57px"><i class="o"></i>实用工具箱小程序</div>
<div class="row" style="top:79px"><i></i><svg viewBox="0 0 16 16"><path d="M1 3.200a1 1 0 0 1 1-1h4l1.500 1.800h6.500a1 1 0 0 1 1 1v8a1 1 0 0 1-1 1h-12a1 1 0 0 1-1-1z" fill="#90a4ae"/></svg><b>@babel</b></div>
<div class="row" style="top:101px"><i></i><svg viewBox="0 0 16 16"><path d="M1 3.200a1 1 0 0 1 1-1h4l1.500 1.800h6.500a1 1 0 0 1 1 1v8a1 1 0 0 1-1 1h-12a1 1 0 0 1-1-1z" fill="#90a4ae"/></svg><b>colorui</b></div>
<div class="row" style="top:123px"><i></i><svg viewBox="0 0 16 16"><path d="M1 3.200a1 1 0 0 1 1-1h4l1.500 1.800h6.500a1 1 0 0 1 1 1v8a1 1 0 0 1-1 1h-12a1 1 0 0 1-1-1z" fill="#90a4ae"/></svg><b>common</b></div>
<div class="row" style="top:145px"><i></i><svg viewBox="0 0 16 16"><path d="M1 3.200a1 1 0 0 1 1-1h4l1.500 1.800h6.500a1 1 0 0 1 1 1v8a1 1 0 0 1-1 1h-12a1 1 0 0 1-1-1z" fill="#90a4ae"/></svg><b>component</b></div>
<div class="row" style="top:167px"><i></i><svg viewBox="0 0 16 16"><path d="M1 3.200a1 1 0 0 1 1-1h4l1.500 1.800h6.500a1 1 0 0 1 1 1v8a1 1 0 0 1-1 1h-12a1 1 0 0 1-1-1z" fill="#c0ca33"/><path d="M8.500 7.500h3v3h-3zM12 7.500h3v3h-3zM8.500 11h3v3h-3zM12 11h3v3h-3z" fill="#f0f4c3"/></svg><b>components</b></div>
<div class="row" style="top:189px"><i></i><svg viewBox="0 0 16 16"><path d="M1 3.200a1 1 0 0 1 1-1h4l1.500 1.800h6.500a1 1 0 0 1 1 1v8a1 1 0 0 1-1 1h-12a1 1 0 0 1-1-1z" fill="#ff7043"/><rect x="8.500" y="7.500" width="6.500" height="7" rx="1" fill="#ffccbc"/><path d="M11 9.500l-1.300 1.500 1.300 1.500M12.500 9.500l1.300 1.500-1.300 1.500" fill="none" stroke="#ff7043" stroke-width=".8"/></svg><b>pages</b></div>
<div class="row" style="top:211px"><i></i><svg viewBox="0 0 16 16"><path d="M1 3.200a1 1 0 0 1 1-1h4l1.500 1.800h6.500a1 1 0 0 1 1 1v8a1 1 0 0 1-1 1h-12a1 1 0 0 1-1-1z" fill="#90a4ae"/></svg><b>pagesA</b></div>
<div class="row" style="top:233px"><i></i><svg viewBox="0 0 16 16"><path d="M1 3.200a1 1 0 0 1 1-1h4l1.500 1.800h6.500a1 1 0 0 1 1 1v8a1 1 0 0 1-1 1h-12a1 1 0 0 1-1-1z" fill="#90a4ae"/></svg><b>pagesB</b></div>
<div class="row" style="top:255px"><i></i><svg viewBox="0 0 16 16"><path d="M1 3.200a1 1 0 0 1 1-1h4l1.500 1.800h6.500a1 1 0 0 1 1 1v8a1 1 0 0 1-1 1h-12a1 1 0 0 1-1-1z" fill="#90a4ae"/></svg><b>pagesC</b></div>
<div class="row" style="top:277px"><i></i><svg viewBox="0 0 16 16"><path d="M1 3.200a1 1 0 0 1 1-1h4l1.500 1.800h6.500a1 1 0 0 1 1 1v8a1 1 0 0 1-1 1h-12a1 1 0 0 1-1-1z" fill="#90a4ae"/></svg><b>pagesD</b></div>
<div class="row" style="top:299px"><i></i><svg viewBox="0 0 16 16"><path d="M1 3.200a1 1 0 0 1 1-1h4l1.500 1.800h6.500a1 1 0 0 1 1 1v8a1 1 0 0 1-1 1h-12a1 1 0 0 1-1-1z" fill="#fbc02d"/><rect x="9" y="7.500" width="6" height="6.500" rx="1" fill="#fff3c4"/><path d="M10 9.500h4M10 11h4M10 12.500h4" stroke="#fbc02d" stroke-width=".7"/></svg><b>static</b></div>
<div class="row" style="top:321px"><i></i><svg viewBox="0 0 16 16"><path d="M1 3.200a1 1 0 0 1 1-1h4l1.500 1.800h6.500a1 1 0 0 1 1 1v8a1 1 0 0 1-1 1h-12a1 1 0 0 1-1-1z" fill="#90a4ae"/></svg><b>subPages</b></div>
<div class="row" style="top:343px"><i></i><svg viewBox="0 0 16 16"><path d="M1 3.200a1 1 0 0 1 1-1h4l1.500 1.800h6.500a1 1 0 0 1 1 1v8a1 1 0 0 1-1 1h-12a1 1 0 0 1-1-1z" fill="#90a4ae"/></svg><b>uni_modules</b></div>
<div class="row" style="top:365px"><i></i><svg viewBox="0 0 16 16"><path d="M1 3.200a1 1 0 0 1 1-1h4l1.500 1.800h6.500a1 1 0 0 1 1 1v8a1 1 0 0 1-1 1h-12a1 1 0 0 1-1-1z" fill="#7cb342"/><rect x="8.500" y="7.500" width="6.500" height="6.500" rx="1.200" fill="#dcedc8"/><path d="M11.750 9v3.500M10 10.750h3.500" stroke="#7cb342" stroke-width="1"/></svg><b>utils</b></div>
<div class="row" style="top:387px"><svg viewBox="0 0 16 16"><rect x="1.500" y="1.500" width="13" height="13" fill="#f5c731"/><text x="5" y="13" font-size="7" font-weight="700" font-family="'Liberation Sans',sans-serif" fill="#333">JS</text></svg><b>app.js</b></div>
<div class="row" style="top:409px"><svg viewBox="0 0 16 16"><path d="M4.800 2.200c-1.600 0-2 .6-2 1.800v2.200c0 1-.5 1.500-1.500 1.800 1 .3 1.500.8 1.500 1.800v2.200c0 1.200.4 1.800 2 1.800M11.200 2.200c1.600 0 2 .6 2 1.800v2.200c0 1 .5 1.500 1.500 1.800-1 .3-1.500.8-1.500 1.800v2.200c0 1.200-.4 1.800-2 1.800" fill="none" stroke="#f5b731" stroke-width="1.300"/><circle cx="6.300" cy="8.600" r=".8" fill="#f5b731"/><circle cx="9.700" cy="8.600" r=".8" fill="#f5b731"/></svg><b>app.json</b></div>
<div class="row s" style="top:431px"><svg viewBox="0 0 16 16"><path d="M2.500 2h12l-1.800 10.500-4.500 1.700-4.400-1.700-.4-2.500h2.300l.2 1 2.300.8 2.400-.8.400-2.500h-8.200l.4-2.200h8.200l.3-2h-8.600z" fill="#42a5f5"/></svg><b>app.wxss</b></div>
<div class="row" style="top:453px"><svg viewBox="0 0 16 16"><path d="M4.800 2.200c-1.600 0-2 .6-2 1.800v2.200c0 1-.5 1.500-1.500 1.800 1 .3 1.500.8 1.500 1.800v2.200c0 1.200.4 1.800 2 1.800M11.200 2.200c1.600 0 2 .6 2 1.800v2.200c0 1 .5 1.500 1.500 1.800-1 .3-1.500.8-1.500 1.800v2.200c0 1.200-.4 1.800-2 1.800" fill="none" stroke="#f5b731" stroke-width="1.300"/><circle cx="6.300" cy="8.600" r=".8" fill="#f5b731"/><circle cx="9.700" cy="8.600" r=".8" fill="#f5b731"/></svg><b>code_obfuscation_conf...</b></div>
<div class="row" style="top:475px"><svg viewBox="0 0 16 16"><path d="M4.800 2.200c-1.600 0-2 .6-2 1.800v2.200c0 1-.5 1.500-1.500 1.800 1 .3 1.500.8 1.500 1.800v2.200c0 1.200.4 1.800 2 1.800M11.200 2.200c1.600 0 2 .6 2 1.800v2.200c0 1 .5 1.500 1.500 1.800-1 .3-1.500.8-1.500 1.800v2.200c0 1.200-.4 1.800-2 1.800" fill="none" stroke="#f5b731" stroke-width="1.300"/><circle cx="6.300" cy="8.600" r=".8" fill="#f5b731"/><circle cx="9.700" cy="8.600" r=".8" fill="#f5b731"/></svg><b>project.config.json</b></div>
<div class="row" style="top:497px"><svg viewBox="0 0 16 16"><path d="M4.800 2.200c-1.600 0-2 .6-2 1.800v2.200c0 1-.5 1.500-1.500 1.800 1 .3 1.500.8 1.500 1.800v2.200c0 1.200.4 1.800 2 1.800M11.200 2.200c1.600 0 2 .6 2 1.800v2.200c0 1 .5 1.500 1.500 1.800-1 .3-1.500.8-1.500 1.800v2.200c0 1.200-.4 1.800-2 1.800" fill="none" stroke="#f5b731" stroke-width="1.300"/><circle cx="6.300" cy="8.600" r=".8" fill="#f5b731"/><circle cx="9.700" cy="8.600" r=".8" fill="#f5b731"/></svg><b>project.private.config.js...</b></div>
<div class="row" style="top:519px"><svg viewBox="0 0 16 16"><circle cx="8" cy="8" r="6.800" fill="#42a5f5"/><rect x="7.100" y="7" width="1.800" height="5" fill="#fff"/><circle cx="8" cy="4.800" r="1.100" fill="#fff"/></svg><b>README.txt</b></div>
<div class="row" style="top:541px"><svg viewBox="0 0 16 16"><path d="M4.800 2.200c-1.600 0-2 .6-2 1.800v2.200c0 1-.5 1.500-1.500 1.800 1 .3 1.500.8 1.500 1.800v2.200c0 1.200.4 1.800 2 1.800M11.200 2.200c1.600 0 2 .6 2 1.800v2.200c0 1 .5 1.500 1.500 1.800-1 .3-1.500.8-1.500 1.800v2.200c0 1.200-.4 1.800-2 1.800" fill="none" stroke="#f5b731" stroke-width="1.300"/><circle cx="6.300" cy="8.600" r=".8" fill="#f5b731"/><circle cx="9.700" cy="8.600" r=".8" fill="#f5b731"/></svg><b>sitemap.json</b></div>
<div class="sec" style="top:865px"><i></i>大纲</div>
</div>
<div id="tabs">
  <div class="abs" style="left:1px;top:0;width:120px;height:30px;background:#2e2e2e"></div>
  <svg class="abs" style="left:11px;top:7px" width="16" height="16" viewBox="0 0 16 16"><path d="M2.500 2h12l-1.800 10.500-4.500 1.700-4.400-1.700-.4-2.500h2.300l.2 1 2.300.8 2.400-.8.400-2.500h-8.200l.4-2.200h8.200l.3-2h-8.600z" fill="#42a5f5"/></svg>
  <span class="abs" style="left:33px;top:1px;line-height:30px;font-size:13px;font-style:italic;color:#fff;letter-spacing:-.550px">app.wxss</span>
  <svg class="abs" style="left:98px;top:9px" width="12" height="12" viewBox="0 0 12 12"><path d="M1.500 1.500l9 9M10.500 1.500l-9 9" stroke="#e8e8e8" stroke-width="1.300"/></svg>
  <svg class="abs" style="left:1120px;top:7px" width="18" height="16" viewBox="0 0 18 16"><text x="1" y="6.500" font-size="6.500" font-weight="700" font-family="'Liberation Sans',sans-serif" fill="#ccc">ab</text><text x="1" y="13" font-size="6.500" font-weight="700" font-family="'Liberation Sans',sans-serif" fill="#ccc">c</text><path d="M15.500 3.500v6.500h-8.500M9.800 7.200l-2.800 2.800 2.800 2.800" fill="none" stroke="#ccc" stroke-width="1.200"/></svg>
  <svg class="abs" style="left:1153px;top:7px" width="16" height="16" viewBox="0 0 16 16"><rect x="2" y="2.500" width="12" height="11" fill="none" stroke="#ccc" stroke-width="1.200"/><path d="M8 2.500v11" stroke="#ccc" stroke-width="1.200"/></svg>
  <div class="abs" style="left:1187px;top:14px;width:2px;height:2px;background:#ccc;box-shadow:5px 0 #ccc,10px 0 #ccc"></div>
</div>
<div id="crumbs">
  <svg class="abs" style="left:8px;top:4px" width="16" height="14" viewBox="0 0 16 14"><path d="M4 3h11M4 7h11M4 11h11" stroke="#bbb" stroke-width="1.200"/><path d="M1 3h1.500M1 7h1.500M1 11h1.500" stroke="#bbb" stroke-width="1.200"/></svg>
  <svg class="abs" style="left:39px;top:3px" width="12" height="16" viewBox="0 0 12 16"><path d="M1.500 1.500h9v12.500l-4.500-4-4.500 4z" fill="none" stroke="#bbb" stroke-width="1.300" stroke-linejoin="round"/></svg>
  <svg class="abs" style="left:68px;top:4px" width="14" height="14" viewBox="0 0 14 14"><path d="M13 7h-11.500M6.500 2l-5 5 5 5" fill="none" stroke="#aaa" stroke-width="1.200"/></svg>
  <svg class="abs" style="left:98px;top:4px" width="14" height="14" viewBox="0 0 14 14"><path d="M1 7h11.500M7.500 2l5 5-5 5" fill="none" stroke="#555" stroke-width="1.200"/></svg>
  <svg class="abs" style="left:127px;top:3px" width="16" height="16" viewBox="0 0 16 16"><path d="M2.500 2h12l-1.800 10.500-4.500 1.700-4.400-1.700-.4-2.500h2.300l.2 1 2.300.8 2.400-.8.400-2.500h-8.200l.4-2.200h8.200l.3-2h-8.600z" fill="#42a5f5"/></svg>
  <span class="abs" style="left:149px;top:1px;line-height:22px;font-size:13px;color:#aaa;letter-spacing:-.300px">app.wxss</span>
  <svg class="abs" style="left:203px;top:7px" width="8" height="9" viewBox="0 0 8 9"><path d="M2 1l4 3.500-4 3.500" fill="none" stroke="#aaa" stroke-width="1.100"/></svg>
  <span class="abs" style="left:216px;top:0;line-height:22px;font-size:13px;color:#aaa">...</span>
</div>
<div id="code">
<div class="ln" style="top:-20px">16</div><div class="cl" style="top:-20px">  <span class="p">margin</span><span class="c">:</span> <span class="n">20</span><span class="u">rpx</span><span class="c">;</span></div>
<div class="ln" style="top:12px">17</div><div class="cl" style="top:12px">  <span class="p">padding</span><span class="c">:</span> <span class="n">20</span><span class="u">rpx</span><span class="c">;</span></div>
<div class="ln" style="top:44px">18</div><div class="cl" style="top:44px">  <span class="p">border-radius</span><span class="c">:</span> <span class="n">10</span><span class="u">rpx</span><span class="c">;</span></div>
<div class="ln" style="top:76px">19</div><div class="cl" style="top:76px">  <span class="p">background-color</span><span class="c">:</span> <span class="sw" style="background:#ff4444"></span><span class="h">#ff4444</span><span class="c">;</span></div>
<div class="ln" style="top:108px">20</div><div class="cl" style="top:108px">  <span class="p">color</span><span class="c">:</span> <span class="sw" style="background:#fff"></span><span class="h">#fff</span><span class="c">;</span></div>
<div class="ln" style="top:140px">21</div><div class="cl" style="top:140px">  <span class="p">width</span><span class="c">:</span> <span class="n">40</span><span class="n">vw</span><span class="c">;</span></div>
<div class="ln" style="top:172px">22</div><div class="cl" style="top:172px">  <span class="p">display</span><span class="c">:</span> <span class="n">flex</span><span class="c">;</span></div>
<div class="ln" style="top:204px">23</div><div class="cl" style="top:204px">  <span class="p">align-items</span><span class="c">:</span> <span class="n">center</span><span class="c">;</span></div>
<div class="ln" style="top:236px">24</div><div class="cl" style="top:236px">  <span class="p">justify-content</span><span class="c">:</span> <span class="n">center</span><span class="c">;</span></div>
<div class="ln" style="top:268px">25</div><div class="cl" style="top:268px"><span class="c">}</span></div>
<div class="ln" style="top:300px">26</div><div class="cl" style="top:300px"></div>
<div class="ln" style="top:332px">27</div><div class="cl" style="top:332px"></div>
<div class="ln" style="top:364px">28</div><div class="cl" style="top:364px"><span class="c">.butss {</span></div>
<div class="ln" style="top:396px">29</div><div class="cl" style="top:396px">  <span class="p">margin</span><span class="c">:</span> <span class="n">20</span><span class="u">rpx</span><span class="c">;</span></div>
<div class="ln" style="top:428px">30</div><div class="cl" style="top:428px">  <span class="p">padding</span><span class="c">:</span> <span class="n">20</span><span class="u">rpx</span><span class="c">;</span></div>
<div class="ln" style="top:460px">31</div><div class="cl" style="top:460px">  <span class="p">border-radius</span><span class="c">:</span> <span class="n">10</span><span class="u">rpx</span><span class="c">;</span></div>
<div class="ln" style="top:492px">32</div><div class="cl" style="top:492px">  <span class="p">background-color</span><span class="c">:</span> <span class="sw" style="background:#ff4444"></span><span class="h">#ff4444</span><span class="c">;</span></div>
<div class="ln" style="top:524px">33</div><div class="cl" style="top:524px">  <span class="p">color</span><span class="c">:</span> <span class="sw" style="background:#fff"></span><span class="h">#fff</span><span class="c">;</span></div>
<div class="ln" style="top:556px">34</div><div class="cl" style="top:556px">  <span class="p">width</span><span class="c">:</span> <span class="n">40</span><span class="n">vw</span><span class="c">;</span></div>
<div class="ln" style="top:588px">35</div><div class="cl" style="top:588px">  <span class="p">display</span><span class="c">:</span> <span class="n">flex</span><span class="c">;</span></div>
<div class="ln" style="top:620px">36</div><div class="cl" style="top:620px">  <span class="p">align-items</span><span class="c">:</span> <span class="n">center</span><span class="c">;</span></div>
<div class="ln" style="top:652px">37</div><div class="cl" style="top:652px">  <span class="p">justify-content</span><span class="c">:</span> <span class="n">center</span><span class="c">;</span></div>
<div class="ln" style="top:684px">38</div><div class="cl" style="top:684px"><span class="c">}</span></div>
<div class="ln" style="top:716px">39</div><div class="cl" style="top:716px"><span class="c">.cu-form-group {</span></div>
<div class="ln" style="top:748px">40</div><div class="cl" style="top:748px">  <span class="p">align-items</span><span class="c">:</span> <span class="n">center</span><span class="c">;</span></div>
<div class="ln" style="top:780px">41</div><div class="cl" style="top:780px">  <span class="p">background-color</span><span class="c">:</span> <span class="p">var</span><span class="c">(</span><span class="u">--white</span><span class="c">)</span><span class="c">;</span></div>
<div class="ln" style="top:812px">42</div><div class="cl" style="top:812px">  <span class="p">display</span><span class="c">:</span> <span class="n">flex</span><span class="c">;</span></div>
<div class="ln" style="top:844px">43</div><div class="cl" style="top:844px">  <span class="p">justify-content</span><span class="c">:</span> <span class="n">space-between</span><span class="c">;</span></div>
<div class="ig" style="top:-20px;height:288px"></div>
<div class="ig" style="top:396px;height:288px"></div>
<div class="ig" style="top:748px;height:128px"></div>
<svg class="fold" style="top:366px" viewBox="0 0 12 12"><path d="M1.500 3.500l4.500 4.500 4.500-4.500" fill="none" stroke="#bbb" stroke-width="1.200"/></svg>
<svg class="fold" style="top:718px" viewBox="0 0 12 12"><path d="M1.500 3.500l4.500 4.500 4.500-4.500" fill="none" stroke="#bbb" stroke-width="1.200"/></svg>
<div class="abs" style="left:1205px;top:0;width:1px;height:860px;background:#454545"></div>
<div class="abs" style="left:1205px;top:4px;width:5px;height:20px;background:#505050"></div>
</div>
<div id="status">
  <svg class="abs" style="left:15px;top:7px" width="14" height="14" viewBox="0 0 14 14"><circle cx="7" cy="7" r="5.600" fill="none" stroke="#b5b5b5" stroke-width="1"/><path d="M4.800 4.800l4.400 4.400M9.200 4.800l-4.400 4.400" stroke="#b5b5b5" stroke-width="1"/></svg>
  <span class="abs" style="left:32px;top:0">0</span>
  <svg class="abs" style="left:42px;top:7px" width="14" height="14" viewBox="0 0 14 14"><path d="M7 1.800l5.600 10.200h-11.200z" fill="none" stroke="#b5b5b5" stroke-width="1"/><path d="M7 5.500v3.500M7 10v1" stroke="#b5b5b5" stroke-width="1"/></svg>
  <span class="abs" style="left:59px;top:0">0</span>
  <span class="abs" style="left:1190px;top:0">行 1，列 1</span>
  <span class="abs" style="left:1262px;top:0">空格: 2</span>
  <span class="abs" style="left:1315px;top:0">UTF-8</span>
  <span class="abs" style="left:1362px;top:0">LF</span>
  <span class="abs" style="left:1389px;top:0">CSS</span>
</div>

<div class="abs" style="left:0;top:1032px;width:1910px;height:1px;background:#3b4349"></div><div class="abs" style="left:0;top:1033px;width:1910px;height:1px;background:#202a32"></div>
</body>
</html>
